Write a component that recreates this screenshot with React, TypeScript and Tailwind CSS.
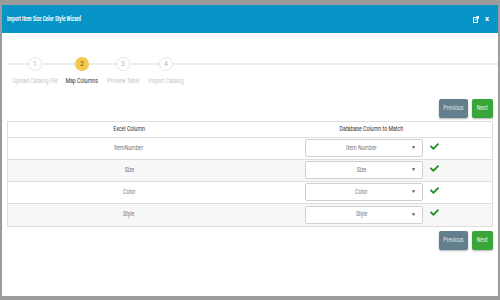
import React from "react";

const steps = [
  { label: "Upload Catalog File", w: "w-[46px]" },
  { label: "Map Columns", w: "w-[48px]" },
  { label: "Preview Table", w: "w-[34px]" },
  { label: "Import Catalog", w: "w-[52px]" },
];

const rows = [
  { excel: "ItemNumber", db: "Item Number" },
  { excel: "Size", db: "Size" },
  { excel: "Color", db: "Color" },
  { excel: "Style", db: "Style" },
];

function Check() {
  return (
    <svg width="9" height="9" viewBox="0 0 512 512" className="fill-[#1e8c1e]">
      <path d="M173.9 439.4l-166.4-166.4c-10-10-10-26.2 0-36.2l36.2-36.2c10-10 26.2-10 36.2 0L192 312.7 432.1 72.6c10-10 26.2-10 36.2 0l36.2 36.2c10 10 10 26.2 0 36.2L210.1 439.4c-10 10-26.2 10-36.2 0z" />
    </svg>
  );
}

// condensed text: the original uses a narrow face we don't have
function Narrow({ children }: { children: React.ReactNode }) {
  return <span className="inline-block origin-center scale-x-[0.75] whitespace-nowrap">{children}</span>;
}

function Buttons() {
  return (
    <div className="flex justify-end gap-[4px]">
      <button className="h-[19px] w-[29px] rounded-[2px] bg-[#627f8e] text-[7px] text-[#dfe7eb] shadow-[0_1px_2px_rgba(0,0,0,0.3)]">
        <Narrow>Previous</Narrow>
      </button>
      <button className="h-[19px] w-[21px] rounded-[2px] bg-[#3aa63a] text-[7px] text-[#e8f7e8] shadow-[0_1px_2px_rgba(0,0,0,0.3)]">
        <Narrow>Next</Narrow>
      </button>
    </div>
  );
}

export default function App() {
  return (
    <div className="h-[300px] w-[500px] overflow-hidden bg-[#9b9b9b] pb-[4px] pl-[2px] pr-[2px] pt-[5px] font-['Roboto',sans-serif]">
      <div className="flex h-full flex-col bg-white">
        {/* header */}
        <div className="flex h-[28px] shrink-0 items-center justify-between bg-[#0894c7] pl-[5px] pr-[9px] text-white">
          <span className="inline-block origin-left scale-x-[0.66] whitespace-nowrap text-[7px] font-bold">
            Import Item Size Color Style Wizard
          </span>
          <div className="flex items-center gap-[6px]">
            <svg width="6" height="7" viewBox="0 0 6 7" className="stroke-white" fill="none">
              <rect x="0.5" y="1.5" width="4" height="5" strokeWidth="1" />
              <path d="M2 4.5 L5.5 0.5 M3.5 0.5 H5.5 V2.5" strokeWidth="1" />
            </svg>
            <span className="text-[8px] font-bold leading-none">x</span>
          </div>
        </div>

        <div className="flex flex-col px-[5px]">
          {/* stepper */}
          <div className="relative mt-[24px] flex pl-[5px]">
            <div className="absolute left-0 right-[-5px] top-[6px] h-[2px] bg-[#ececec]" />
            {steps.map((s, i) => (
              <div key={s.label} className={"relative flex flex-col items-center " + s.w}>
                <div
                  className={
                    i === 1
                      ? "flex h-[14px] w-[14px] items-center justify-center rounded-full bg-[#f2c94c] text-[7px] text-[#6b5a1f]"
                      : "flex h-[14px] w-[14px] items-center justify-center rounded-full border border-[#e6e6e6] bg-white text-[7px] text-[#b5b5b5]"
                  }
                >
                  {i + 1}
                </div>
                <span
                  className={
                    i === 1
                      ? "mt-[5px] text-[7px] text-[#333]"
                      : "mt-[5px] text-[7px] text-[#c4c4c4]"
                  }
                >
                  <Narrow>{s.label}</Narrow>
                </span>
              </div>
            ))}
          </div>

          <div className="mt-[12px]">
            <Buttons />
          </div>

          {/* table */}
          <div className="mt-[3px] border border-[#dedede] text-[7px]">
            <div className="grid h-[16px] grid-cols-2 items-center border-b border-[#dedede] text-[#333]">
              <div className="text-center">
                <Narrow>Excel Column</Narrow>
              </div>
              <div className="text-center">
                <Narrow>Database Column to Match</Narrow>
              </div>
            </div>
            {rows.map((r, i) => (
              <div
                key={r.excel}
                className={
                  (i % 2 === 1 ? "bg-[#f7f7f7] " : "bg-white ") +
                  "grid h-[22px] grid-cols-2 items-center border-b border-[#dedede] text-[#777] last:border-b-0"
                }
              >
                <div className="text-center">
                  <Narrow>{r.excel}</Narrow>
                </div>
                <div className="flex items-center pl-[55px]">
                  <div className="flex h-[18px] w-[118px] items-center rounded-[2px] border border-[#cfcfcf] bg-white px-[6px]">
                    <span className="flex-1 text-center text-[#777]">
                      <Narrow>{r.db}</Narrow>
                    </span>
                    <span className="text-[5px] text-[#555]">▼</span>
                  </div>
                  <div className="ml-[7px] -mt-[4px]">
                    <Check />
                  </div>
                </div>
              </div>
            ))}
          </div>

          <div className="mt-[4px]">
            <Buttons />
          </div>
        </div>
      </div>
    </div>
  );
}
